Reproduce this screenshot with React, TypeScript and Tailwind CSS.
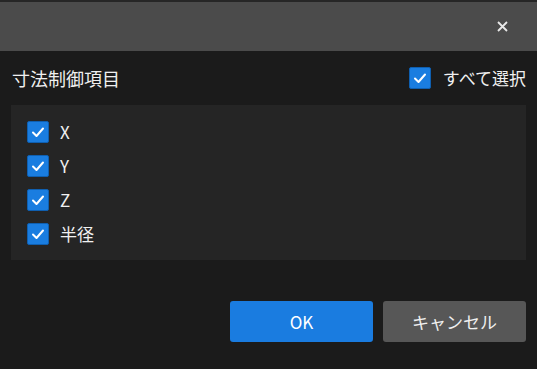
import React from "react";

const font = { fontFamily: '"Noto Sans CJK JP", "Noto Sans", sans-serif' };

function Check() {
  return (
    <span className="flex h-[22px] w-[22px] shrink-0 items-center justify-center rounded-[2px] border border-[#0f5fb0] bg-[#1a7de0]">
      <svg width="16" height="16" viewBox="0 0 16 16" fill="none">
        <path d="M3 8.5 L6.5 12 L13 4.5" stroke="white" strokeWidth="2" strokeLinecap="round" strokeLinejoin="round" />
      </svg>
    </span>
  );
}

export default function App() {
  const items = ["X", "Y", "Z", "半径"];
  return (
    <div className="flex h-[369px] w-[537px] flex-col bg-[#1b1b1b] text-[#f0f0f0]" style={font}>
      <div className="flex h-[51px] items-center justify-end border-t-2 border-[#262626] bg-[#4b4b4b] pr-[29px]">
        <svg width="11" height="11" viewBox="0 0 11 11">
          <path d="M1 1 L10 10 M10 1 L1 10" stroke="#e8e8e8" strokeWidth="1.8" />
        </svg>
      </div>
      <div className="flex flex-col px-[11px]">
        <div className="flex h-[54px] items-center justify-between pl-[1px]">
          <span className="text-[18px]">寸法制御項目</span>
          <div className="flex items-center gap-[12px]">
            <Check />
            <span className="text-[17px]">すべて選択</span>
          </div>
        </div>
        <div className="flex h-[155px] flex-col gap-[12px] bg-[#252525] pl-[16px] pt-[16px]">
          {items.map((t) => (
            <div key={t} className="flex h-[22px] items-center gap-[11px]">
              <Check />
              <span className="text-[17px]">{t}</span>
            </div>
          ))}
        </div>
        <div className="mt-[41px] flex justify-end gap-[10px]">
          <button className="h-[41px] w-[143px] rounded-[3px] bg-[#1a7ce0] text-[17px] text-white">OK</button>
          <button className="h-[41px] w-[143px] rounded-[3px] bg-[#575757] text-[17px] text-[#f0f0f0]">キャンセル</button>
        </div>
      </div>
    </div>
  );
}
